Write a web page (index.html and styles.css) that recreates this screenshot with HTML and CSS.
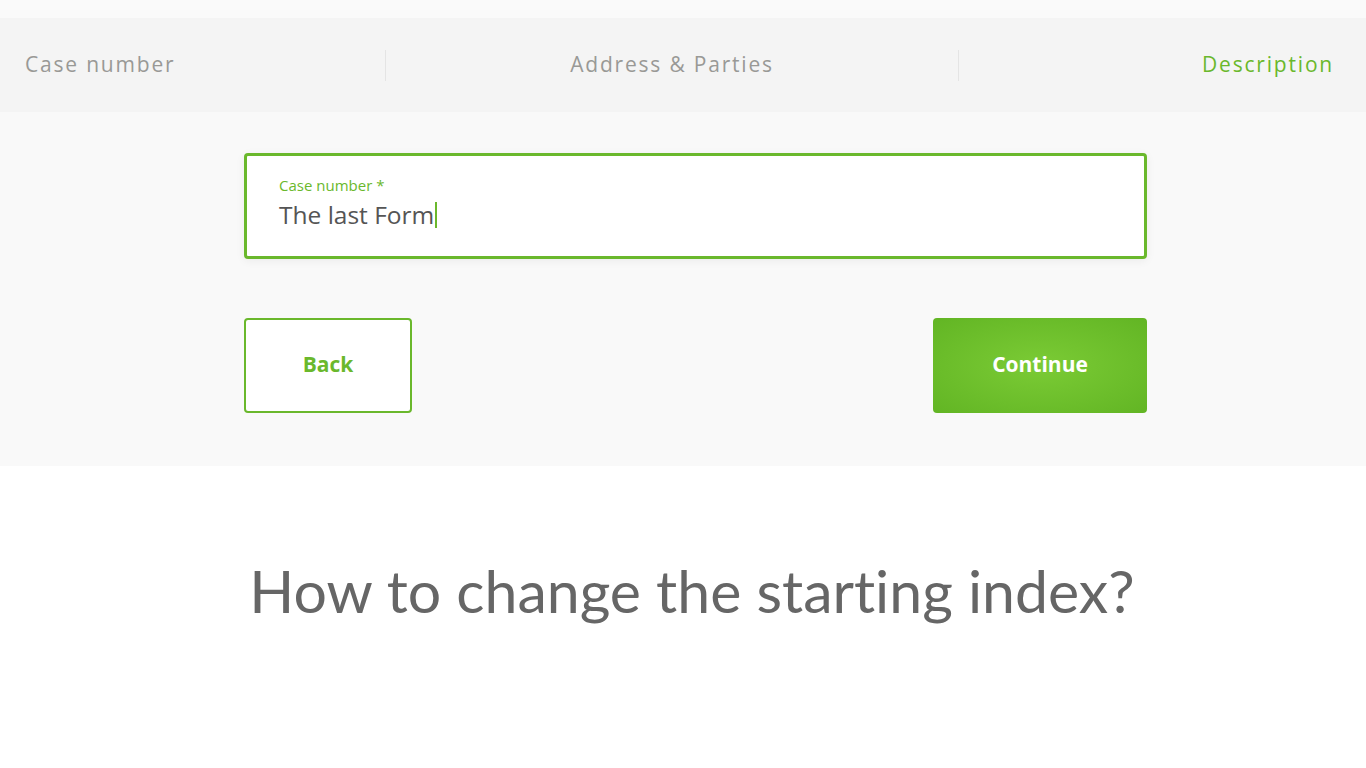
FILE: index.html
```html
<!DOCTYPE html>
<html lang="en">
<head>
<meta charset="utf-8">
<title>Form</title>
<link rel="stylesheet" href="styles.css">
</head>
<body>
<div class="top-strip"></div>
<nav class="steps">
  <div class="step step-left">Case number</div>
  <div class="step step-mid">Address &amp; Parties</div>
  <div class="step step-right active">Description</div>
</nav>
<section class="form-area">
  <div class="form">
    <div class="field">
      <label class="field-label">Case number *</label>
      <div class="field-value">The last Form<span class="caret"></span></div>
    </div>
    <div class="actions">
      <button class="btn btn-back">Back</button>
      <button class="btn btn-continue">Continue</button>
    </div>
  </div>
</section>
<section class="content">
  <h1 class="title">How to change the starting index?</h1>
</section>
</body>
</html>
```
FILE: styles.css
```css
* { box-sizing: border-box; }
html, body { margin: 0; padding: 0; }
body {
  background: #ffffff;
  font-family: "Open Sans", "Liberation Sans", sans-serif;
}
.top-strip { height: 18px; background: #fafafa; }
.steps {
  height: 94px;
  background: #f4f4f4;
  display: grid;
  grid-template-columns: 386px 573px 1fr;
  align-items: center;
}
.step {
  font-size: 21px;
  letter-spacing: 1.8px;
  color: #999996;
  height: 31px;
  display: flex;
  align-items: center;
  padding-bottom: 2px;
}
.step-left { padding-left: 25px; border-right: 1px solid #e4e4e4; }
.step-mid { justify-content: center; border-right: 1px solid #e4e4e4; }
.step-right { justify-content: flex-end; padding-right: 32px; }
.step.active { color: #6ab82c; }

.form-area {
  background: #f9f9f9;
  height: 354px;
  padding-top: 41px;
}
.form { width: 903px; margin-left: 244px; }
.field {
  height: 106px;
  background: #fff;
  border: 3px solid #6ab82c;
  border-radius: 4px;
  box-shadow: 0 2px 10px rgba(0,0,0,0.06);
  padding: 19px 0 0 32px;
}
.field-label {
  display: block;
  font-size: 15px;
  color: #6ab82c;
  line-height: 20px;
}
.field-value {
  font-size: 24.5px;
  color: #555555;
  line-height: 30px;
  margin-top: 5px;
  display: flex;
  align-items: center;
}
.caret {
  display: inline-block;
  width: 2px;
  height: 26px;
  background: #6ab82c;
  margin-left: 1px;
}
.actions {
  margin-top: 59px;
  display: flex;
  justify-content: space-between;
}
.btn {
  height: 95px;
  border-radius: 4px;
  font-family: "Open Sans", "Liberation Sans", sans-serif;
  font-size: 21px;
  font-weight: 700;
  padding-bottom: 4px;
  cursor: pointer;
}
.btn-back {
  width: 168px;
  background: #fff;
  border: 2px solid #6ab82c;
  color: #6ab82c;
}
.btn-continue {
  width: 214px;
  border: none;
  color: #fff;
  background: radial-gradient(ellipse at center, #7bcb35 0%, #62b524 100%);
}
.content { padding-top: 85px; padding-left: 18px; }
.title {
  margin: 0;
  text-align: center;
  font-family: Lato, "Liberation Sans", sans-serif;
  font-weight: 400;
  font-size: 59px;
  font-variant-ligatures: none;
  color: #666666;
  line-height: 80px;
}
```
